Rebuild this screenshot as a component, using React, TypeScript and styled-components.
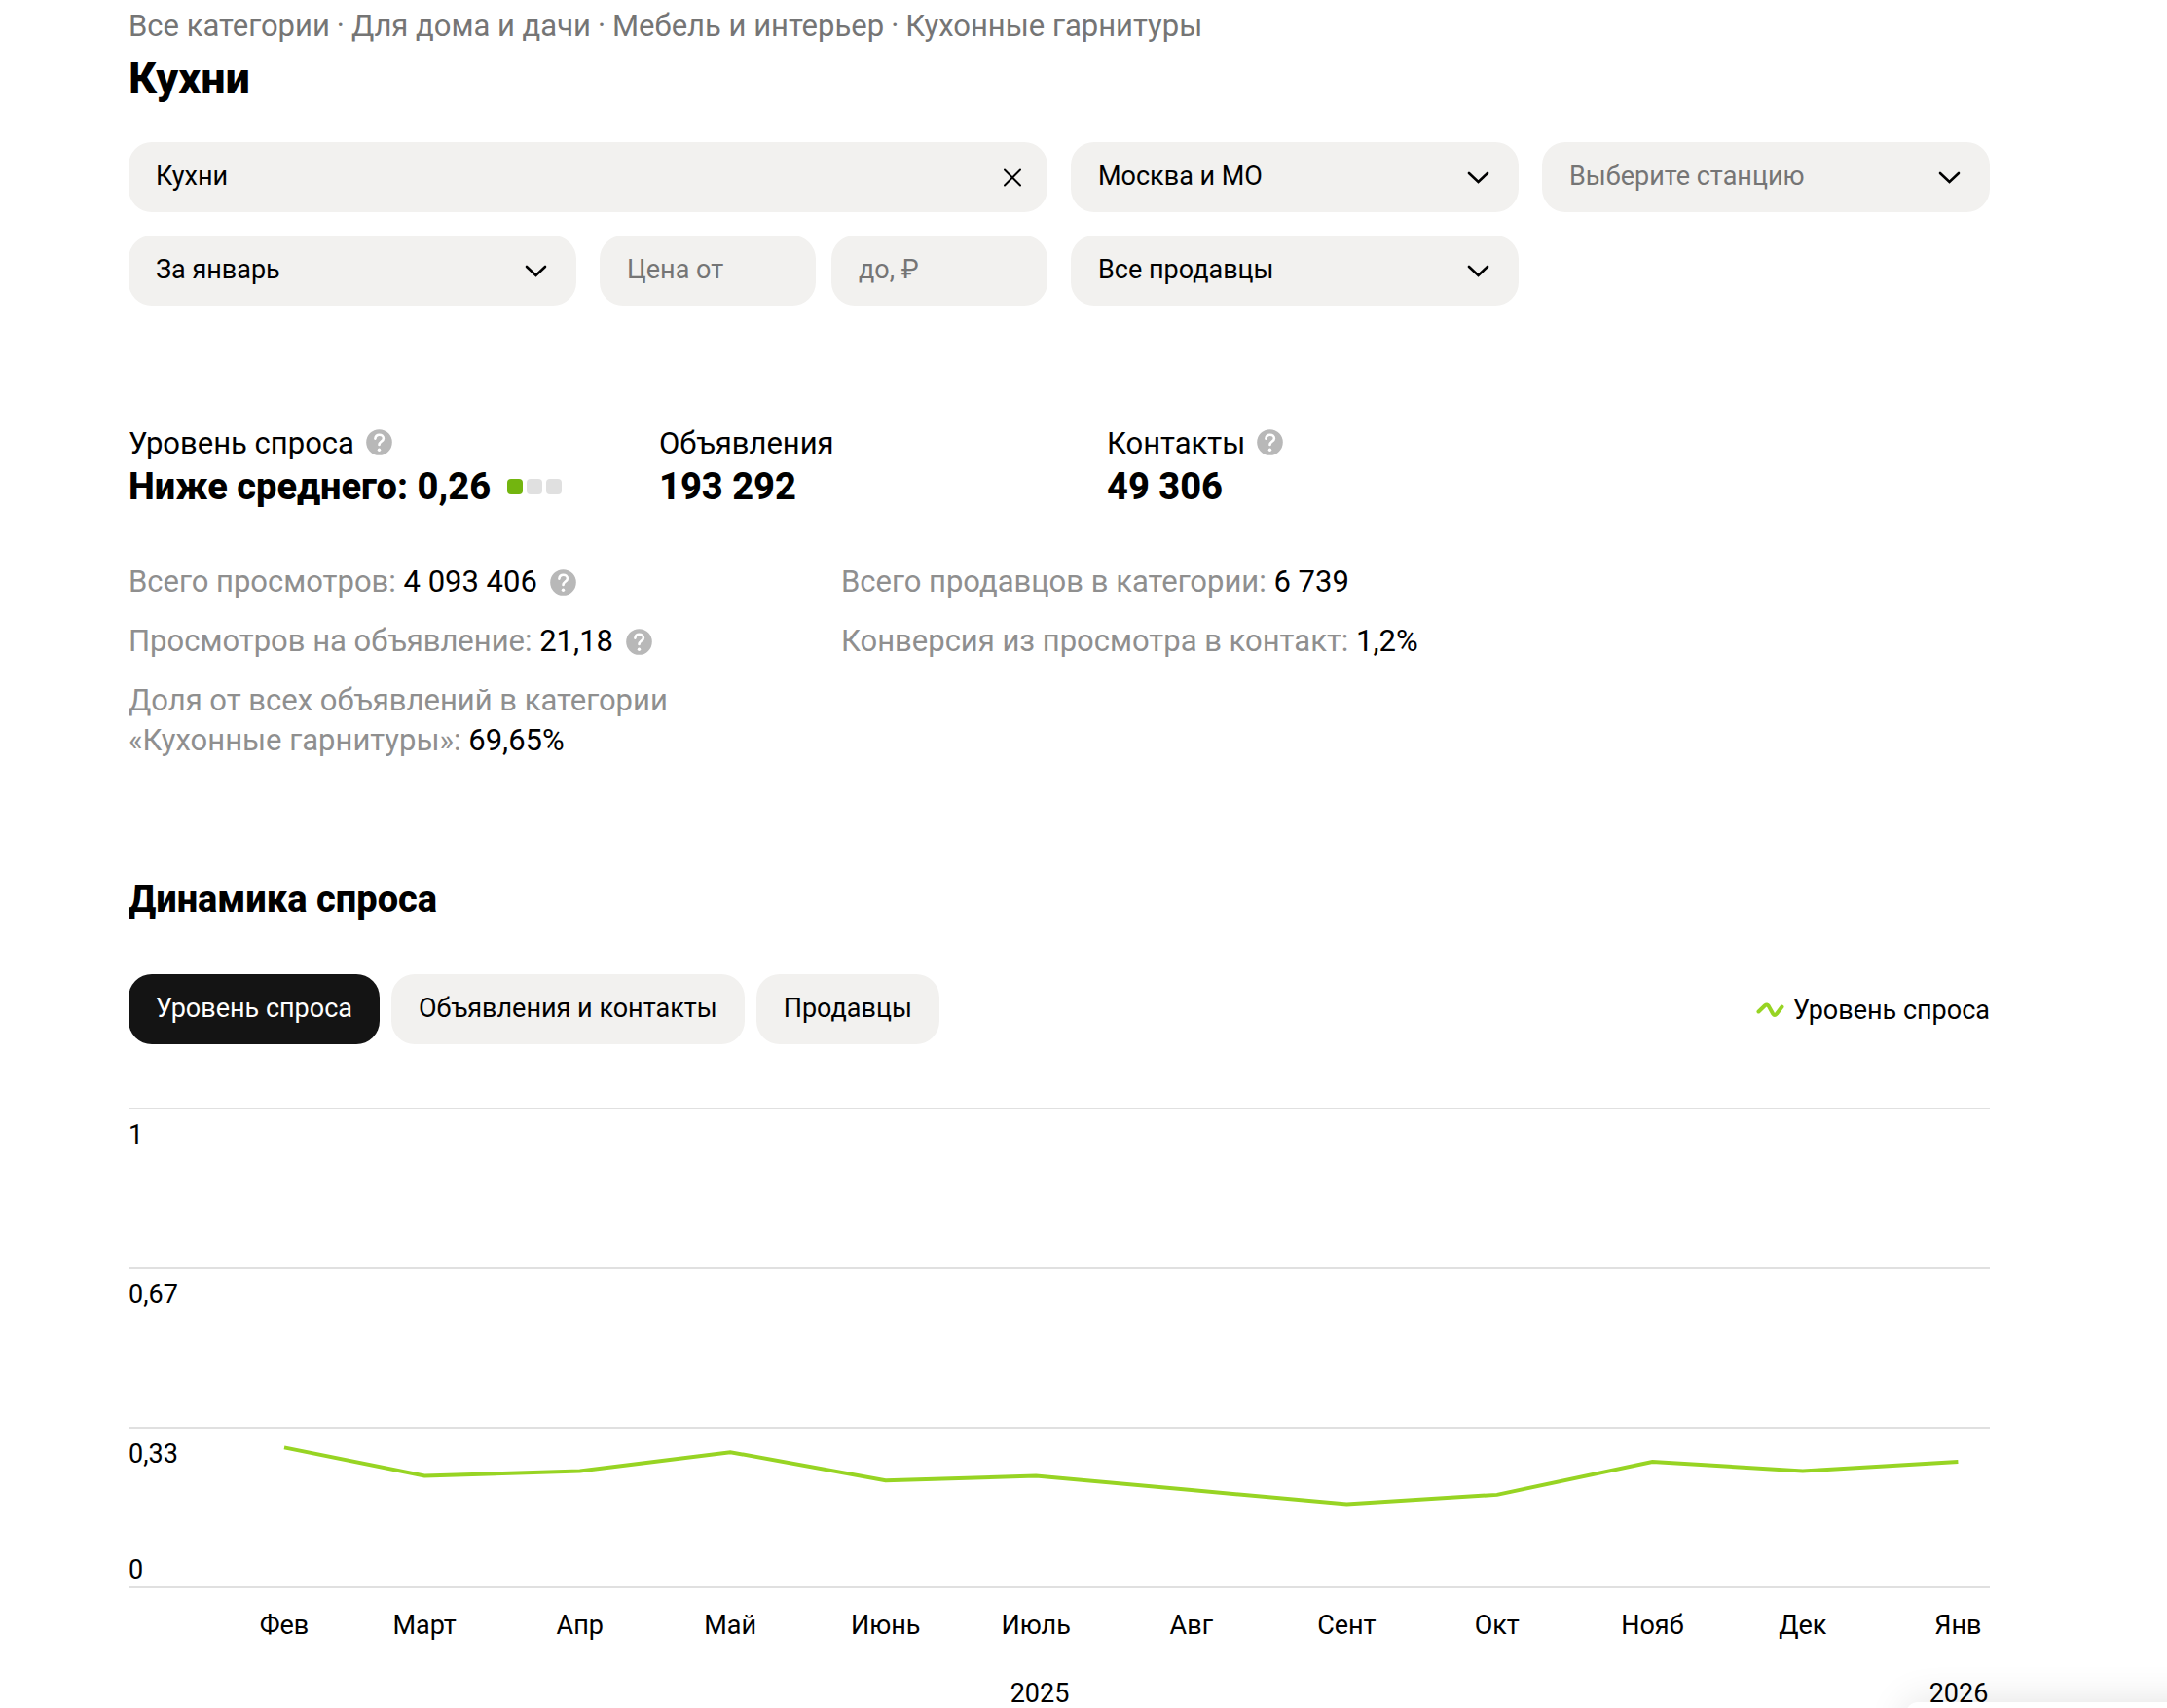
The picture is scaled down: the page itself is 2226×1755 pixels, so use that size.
import React from "react";
import styled, { createGlobalStyle } from "styled-components";

const GlobalStyle = createGlobalStyle`
  *, *::before, *::after { box-sizing: border-box; }
  body {
    margin: 0;
    background: #fff;
    color: #000;
    font-family: Roboto, "Liberation Sans", sans-serif;
    font-size: 27px;
    font-weight: 400;
    line-height: 32px;
  }
  h1, h2, p, dl, dd { margin: 0; }
  button, input, select { font: inherit; color: inherit; }
`;

const Page = styled.main`
  padding: 7px 182px 0 132px;
`;

const Crumbs = styled.nav`
  display: flex;
  flex-wrap: wrap;
  gap: 0 7px;
  font-size: 31px;
  line-height: 40px;
  color: #757575;
  a { color: inherit; text-decoration: none; }
`;

const Title = styled.h1`
  margin-top: 10px;
  font-size: 45px;
  line-height: 48px;
  font-weight: 800;
`;

const Filters = styled.form`
  display: grid;
  grid-template-columns: repeat(4, minmax(0, 1fr));
  gap: 24px;
  margin-top: 41px;
`;

const Field = styled.div<{ $span?: number }>`
  grid-column: span ${(p) => p.$span ?? 1};
  display: grid;
  align-items: center;
  height: 72px;
  border-radius: 24px;
  background: #f2f1ef;
  > * { grid-area: 1 / 1; }
  > svg { justify-self: end; margin-right: 28px; pointer-events: none; }
`;

const PriceRange = styled.div`
  display: grid;
  grid-template-columns: 1fr 1fr;
  gap: 16px;
`;

const TextInput = styled.input`
  width: 100%;
  height: 100%;
  padding: 0 28px 2px;
  border: 0;
  border-radius: 24px;
  background: none;
  &::placeholder { color: #757575; opacity: 1; }
`;

const Select = styled.select<{ $empty?: boolean }>`
  width: 100%;
  height: 100%;
  padding: 0 76px 2px 28px;
  border: 0;
  border-radius: 24px;
  background: none;
  appearance: none;
  color: ${(p) => (p.$empty ? "#757575" : "#000")};
`;

const ClearButton = styled.button`
  justify-self: end;
  display: flex;
  margin-right: 22px;
  padding: 0;
  border: 0;
  background: none;
`;

const Metrics = styled.dl`
  display: grid;
  grid-template-columns: 545px 460px 1fr;
  margin-top: 122px;
`;

const MetricLabel = styled.dt`
  display: flex;
  align-items: center;
  gap: 12px;
  font-size: 31px;
  line-height: 40px;
  button { margin-bottom: 4px; }
`;

const MetricValue = styled.dd`
  display: flex;
  align-items: center;
  gap: 17px;
  font-size: 38px;
  line-height: 48px;
  font-weight: 800;
`;

const Level = styled.span`
  display: flex;
  gap: 4px;
`;

const LevelDot = styled.span<{ $on?: boolean }>`
  width: 16px;
  height: 16px;
  border-radius: 4px;
  background: ${(p) => (p.$on ? "#73b50f" : "#e0e0e0")};
`;

const HelpButton = styled.button`
  display: inline-flex;
  padding: 0;
  border: 0;
  background: none;
`;

const Details = styled.div`
  display: grid;
  grid-template-columns: 684px 1fr;
  column-gap: 48px;
  align-items: start;
  margin-top: 53px;
`;

const DetailList = styled.div`
  display: grid;
  gap: 20px;
`;

const Detail = styled.p`
  font-size: 31px;
  line-height: 41px;
  color: #8f8f8f;
  strong { font-weight: 400; color: #000; }
  button { margin-left: 13px; vertical-align: -4px; }
`;

const SectionTitle = styled.h2`
  margin-top: 119px;
  font-size: 38px;
  line-height: 48px;
  font-weight: 800;
`;

const ChartHeader = styled.div`
  display: flex;
  justify-content: space-between;
  align-items: center;
  margin-top: 53px;
`;

const Tabs = styled.div`
  display: flex;
  gap: 12px;
`;

const Tab = styled.button<{ $active?: boolean }>`
  height: 72px;
  padding: 0 28px 2px;
  border: 0;
  border-radius: 24px;
  background: ${(p) => (p.$active ? "#141414" : "#f2f1ef")};
  color: ${(p) => (p.$active ? "#fff" : "#000")};
`;

const Legend = styled.div`
  display: flex;
  align-items: center;
  gap: 9px;
  padding-top: 2px;
`;

const Plot = styled.div`
  position: relative;
  margin-top: 65px;
  border-bottom: 2px solid #e0e0e0;
`;

const Band = styled.div`
  display: flex;
  flex-direction: column;
  justify-content: space-between;
  height: 164px;
  padding: 10px 0 1px;
  border-top: 2px solid #e0e0e0;
`;

const LineLayer = styled.svg`
  position: absolute;
  inset: 0;
  width: 100%;
  height: 100%;
`;

const Axis = styled.div<{ $stops: number[] }>`
  display: grid;
  grid-template-columns: ${(p) => p.$stops.map((s) => `minmax(0, ${s}fr)`).join(" ")};
`;

const Months = styled(Axis)`
  margin-top: 22px;
`;

const Years = styled(Axis)`
  margin-top: 38px;
`;

const Tick = styled.span`
  justify-self: end;
  display: flex;
  justify-content: center;
  width: 0;
  white-space: nowrap;
`;

/* Sheet that peeks in from the bottom right corner of the window. */
const FloatingPanel = styled.aside`
  position: fixed;
  right: -60px;
  bottom: -60px;
  width: 328px;
  height: 66px;
  border-radius: 12px;
  background: #fff;
  box-shadow: 0 0 40px rgba(0, 0, 0, 0.12);
`;

const Chevron = () => (
  <svg width="27" height="16" viewBox="0 0 27 16" fill="none" stroke="#000" strokeWidth="2.6" strokeLinecap="round" strokeLinejoin="miter" aria-hidden="true">
    <path d="M4 4 L13.5 13 L23 4" />
  </svg>
);

const Help = () => (
  <HelpButton type="button" aria-label="Подсказка">
    <svg width="27" height="27" viewBox="0 0 27 27" fill="none" aria-hidden="true">
      <circle cx="13.5" cy="13.5" r="13.3" fill="#b8b8b8" />
      <path d="M9.4 9.6 C9.7 7 11.3 5.7 13.6 5.7 C16.1 5.7 17.9 7.2 17.9 9.4 C17.9 12.4 13.5 12.6 13.5 16" stroke="#fff" strokeWidth="2.6" strokeLinecap="round" />
      <circle cx="13.5" cy="21.2" r="1.7" fill="#fff" />
    </svg>
  </HelpButton>
);

const CRUMBS = ["Все категории", "Для дома и дачи", "Мебель и интерьер", "Кухонные гарнитуры"];

const WIDTH = 1912;
const FIRST_X = 160;
const DAY = 1719.4 / 334;

const POINTS = [
  { month: "Фев", days: 0, value: 0.29 },
  { month: "Март", days: 28, value: 0.23 },
  { month: "Апр", days: 31, value: 0.24 },
  { month: "Май", days: 30, value: 0.28 },
  { month: "Июнь", days: 31, value: 0.22 },
  { month: "Июль", days: 30, value: 0.23 },
  { month: "Авг", days: 31, value: 0.2 },
  { month: "Сент", days: 31, value: 0.17 },
  { month: "Окт", days: 30, value: 0.19 },
  { month: "Нояб", days: 31, value: 0.26 },
  { month: "Дек", days: 30, value: 0.24 },
  { month: "Янв", days: 31, value: 0.26 },
];

const monthStops = POINTS.map((p, i) => (i === 0 ? FIRST_X : p.days * DAY));
const lineX = monthStops.map((_, i) => monthStops.slice(0, i + 1).reduce((a, b) => a + b, 0));
const line = POINTS.map((p, i) => `${lineX[i].toFixed(1)},${(492 - p.value * 487).toFixed(1)}`).join(" ");
const tail = WIDTH - lineX[lineX.length - 1];

const Dropdown = ({ label, value, empty }: { label: string; value: string; empty?: boolean }) => (
  <Field>
    <Select aria-label={label} $empty={empty} defaultValue={value}>
      <option>{value}</option>
    </Select>
    <Chevron />
  </Field>
);

export default function App() {
  return (
    <>
      <GlobalStyle />
      <Page>
        <Crumbs aria-label="Категории">
          {CRUMBS.map((c, i) => (
            <React.Fragment key={c}>
              {i > 0 && <span>·</span>}
              <a href="#">{c}</a>
            </React.Fragment>
          ))}
        </Crumbs>
        <Title>Кухни</Title>

        <Filters>
          <Field $span={2}>
            <TextInput aria-label="Запрос" defaultValue="Кухни" />
            <ClearButton type="button" aria-label="Очистить">
              <svg width="28" height="28" viewBox="0 0 28 28" stroke="#000" strokeWidth="2" strokeLinecap="round" aria-hidden="true">
                <path d="M6 6.5 L22 22.5 M22 6.5 L6 22.5" />
              </svg>
            </ClearButton>
          </Field>
          <Dropdown label="Регион" value="Москва и МО" />
          <Dropdown label="Станция" value="Выберите станцию" empty />
          <Dropdown label="Период" value="За январь" />
          <PriceRange>
            <Field>
              <TextInput aria-label="Цена от" placeholder="Цена от" />
            </Field>
            <Field>
              <TextInput aria-label="Цена до" placeholder="до, ₽" />
            </Field>
          </PriceRange>
          <Dropdown label="Продавцы" value="Все продавцы" />
        </Filters>

        <Metrics>
          <div>
            <MetricLabel>Уровень спроса <Help /></MetricLabel>
            <MetricValue>
              Ниже среднего: 0,26
              <Level>
                <LevelDot $on />
                <LevelDot />
                <LevelDot />
              </Level>
            </MetricValue>
          </div>
          <div>
            <MetricLabel>Объявления</MetricLabel>
            <MetricValue>193 292</MetricValue>
          </div>
          <div>
            <MetricLabel>Контакты <Help /></MetricLabel>
            <MetricValue>49 306</MetricValue>
          </div>
        </Metrics>

        <Details>
          <DetailList>
            <Detail>Всего просмотров: <strong>4 093 406</strong><Help /></Detail>
            <Detail>Просмотров на объявление: <strong>21,18</strong><Help /></Detail>
            <Detail>
              Доля от всех объявлений в категории
              <br />
              «Кухонные гарнитуры»: <strong>69,65%</strong>
            </Detail>
          </DetailList>
          <DetailList>
            <Detail>Всего продавцов в категории: <strong>6 739</strong></Detail>
            <Detail>Конверсия из просмотра в контакт: <strong>1,2%</strong></Detail>
          </DetailList>
        </Details>

        <SectionTitle>Динамика спроса</SectionTitle>
        <ChartHeader>
          <Tabs>
            <Tab type="button" $active>Уровень спроса</Tab>
            <Tab type="button">Объявления и контакты</Tab>
            <Tab type="button">Продавцы</Tab>
          </Tabs>
          <Legend>
            <svg width="29" height="18" viewBox="0 0 29 18" fill="none" stroke="#97d423" strokeWidth="4" strokeLinecap="round" strokeLinejoin="round" aria-hidden="true">
              <path d="M2.5 10.5 L9 4.3 Q11.2 2.3 12.8 4.9 L17.2 12.8 Q18.8 15.4 21 12.8 L26.5 5.5" />
            </svg>
            Уровень спроса
          </Legend>
        </ChartHeader>

        <Plot>
          <Band>1</Band>
          <Band>0,67</Band>
          <Band>
            <span>0,33</span>
            <span>0</span>
          </Band>
          <LineLayer viewBox="0 0 1912 494" preserveAspectRatio="none" aria-hidden="true">
            <polyline points={line} fill="none" stroke="#97d423" strokeWidth="4" vectorEffect="non-scaling-stroke" />
          </LineLayer>
        </Plot>
        <Months $stops={[...monthStops, tail]}>
          {POINTS.map((p) => (
            <Tick key={p.month}>{p.month}</Tick>
          ))}
        </Months>
        <Years $stops={[936, 944, 32]}>
          <Tick>2025</Tick>
          <Tick>2026</Tick>
        </Years>
      </Page>
      <FloatingPanel />
    </>
  );
}
